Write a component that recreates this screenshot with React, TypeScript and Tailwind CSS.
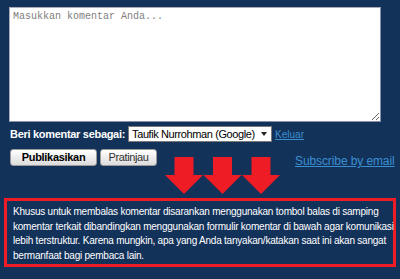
import React from "react";

const Arrows = () => (
  <svg width="116" height="37" viewBox="0 0 116 37" className="block">
    {[0, 38.5, 77].map((x) => (
      <polygon
        key={x}
        points={`${x + 9.5},0 ${x + 28.5},0 ${x + 28.5},18 ${x + 38},18 ${x + 19},37 ${x},18 ${x + 9.5},18`}
        fill="#ee1c25"
      />
    ))}
  </svg>
);

export default function App() {
  return (
    <div className="min-h-screen bg-[#13325a] pt-[7px] font-['Liberation_Sans',Arial,sans-serif]">
      {/* Comment box */}
      <div className="pl-[9px]">
        <textarea
          placeholder="Masukkan komentar Anda..."
          className="block w-[372px] h-[115px] bg-white border border-[#a9acb8] border-b-[#8890a8] border-r-[#8890a8] px-[3px] py-[2px] text-[10px] leading-[14px] font-['Liberation_Mono',monospace] text-black placeholder:text-[#808080] outline-none"
        />
      </div>

      {/* Identity row */}
      <div className="flex items-center mt-[4px] pl-[10px] h-[16px]">
        <span className="text-[11px] tracking-[-0.3px] font-bold text-white">Beri komentar sebagai:</span>
        <div className="relative ml-[3px]">
          <select className="appearance-none block w-[144px] h-[16px] bg-white border border-[#7a7a7a] pl-[3px] pr-[14px] text-[11px] tracking-[-0.4px] leading-[14px] text-black">
            <option>Taufik Nurrohman (Google)</option>
          </select>
          <span className="pointer-events-none absolute right-[5px] top-[6px] w-0 h-0 border-l-[3px] border-r-[3px] border-t-[4px] border-l-transparent border-r-transparent border-t-[#222]" />
        </div>
        <a href="#" className="ml-[3px] text-[10px] text-[#3a8fd0] underline">
          Keluar
        </a>
      </div>

      {/* Actions row */}
      <div className="flex items-start mt-[7px] pl-[10px]">
        <button className="w-[87px] h-[17px] border border-[#9a9a9a] rounded-[3px] bg-gradient-to-b from-white to-[#dcdcdc] text-[11px] tracking-[-0.3px] leading-[15px] font-bold text-black">
          Publikasikan
        </button>
        <button className="ml-[3px] w-[57px] h-[17px] border border-[#9a9a9a] rounded-[3px] bg-gradient-to-b from-white to-[#dcdcdc] text-[11px] tracking-[-0.4px] leading-[15px] text-[#333]">
          Pratinjau
        </button>
        <div className="ml-[8px] mt-[8px]">
          <Arrows />
        </div>
        <a href="#" className="ml-[14px] mt-[3px] text-[12px] tracking-[-0.1px] text-[#3a8fd0] underline">
          Subscribe by email
        </a>
      </div>

      {/* Notice */}
      <div className="mx-[4px] mt-[4px] border-[3px] border-[#ee1c25] px-[6px] pt-[4px] pb-[1px] text-[10px] tracking-[-0.22px] leading-[14.5px] text-white whitespace-nowrap">
        Khusus untuk membalas komentar disarankan menggunakan tombol balas di samping
        <br />
        komentar terkait dibandingkan menggunakan formulir komentar di bawah agar komunikasi
        <br />
        lebih terstruktur. Karena mungkin, apa yang Anda tanyakan/katakan saat ini akan sangat
        <br />
        bermanfaat bagi pembaca lain.
      </div>
    </div>
  );
}
